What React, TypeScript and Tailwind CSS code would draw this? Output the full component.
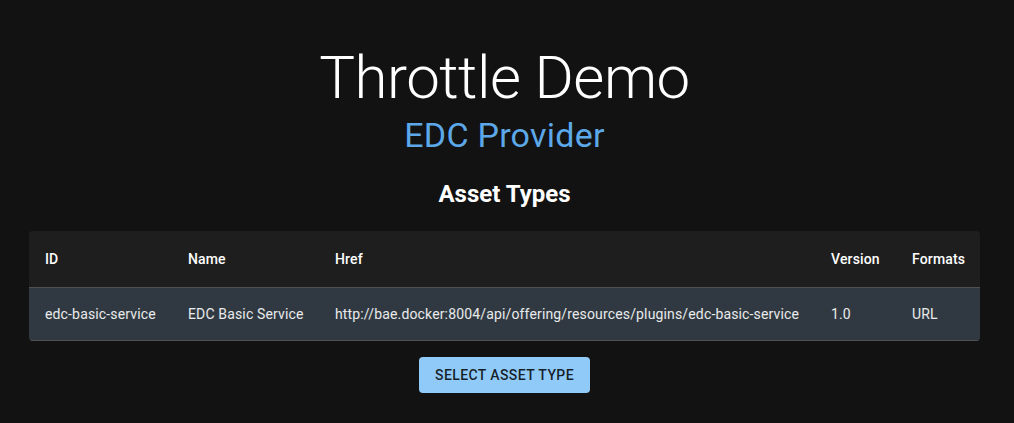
const rows = [
  {
    id: "edc-basic-service",
    name: "EDC Basic Service",
    href: "http://bae.docker:8004/api/offering/resources/plugins/edc-basic-service",
    version: "1.0",
    formats: "URL",
  },
];

export default function App() {
  return (
    <div className="min-h-[423px] bg-[#121212] text-white font-['Roboto',sans-serif] pl-[29px] pr-[34px] pt-[42px]">
      <div className="flex flex-col items-center">
        <h1 className="text-[60px] leading-[72px] font-light tracking-[-0.5px]">Throttle Demo</h1>
        <h2 className="text-[34px] leading-[42px] font-normal tracking-[0.25px] text-[#5ca8e8]">EDC Provider</h2>
        <h3 className="mt-[22px] text-[24px] leading-[32px] font-bold">Asset Types</h3>
      </div>

      <div className="mt-[21px] rounded bg-[#1e1e1e] overflow-hidden">
        <table className="w-full table-fixed border-collapse text-left text-sm tracking-[0.15px] whitespace-nowrap">
          <thead>
            <tr className="border-b border-[#515151]">
              <th className="w-[143px] px-4 py-4 leading-6 font-medium">ID</th>
              <th className="w-[147px] px-4 py-4 leading-6 font-medium">Name</th>
              <th className="w-[496px] px-4 py-4 leading-6 font-medium">Href</th>
              <th className="w-[81px] px-4 py-4 leading-6 font-medium">Version</th>
              <th className="w-[84px] px-4 py-4 leading-6 font-medium">Formats</th>
            </tr>
          </thead>
          <tbody>
            {rows.map((r) => (
              <tr key={r.id} className="bg-[#303941] border-b border-[#515151]">
                <td className="px-4 py-4 leading-5 text-white/90">{r.id}</td>
                <td className="px-4 py-4 leading-5 text-white/90">{r.name}</td>
                <td className="px-4 py-4 leading-5 text-white/90">{r.href}</td>
                <td className="px-4 py-4 leading-5 text-white/90">{r.version}</td>
                <td className="px-4 py-4 leading-5 text-white/90">{r.formats}</td>
              </tr>
            ))}
          </tbody>
        </table>
      </div>

      <div className="mt-4 flex justify-center">
        <button className="h-9 px-4 rounded bg-[#90caf9] text-black/85 text-sm font-medium uppercase tracking-[0.4px]">
          Select Asset Type
        </button>
      </div>
    </div>
  );
}
